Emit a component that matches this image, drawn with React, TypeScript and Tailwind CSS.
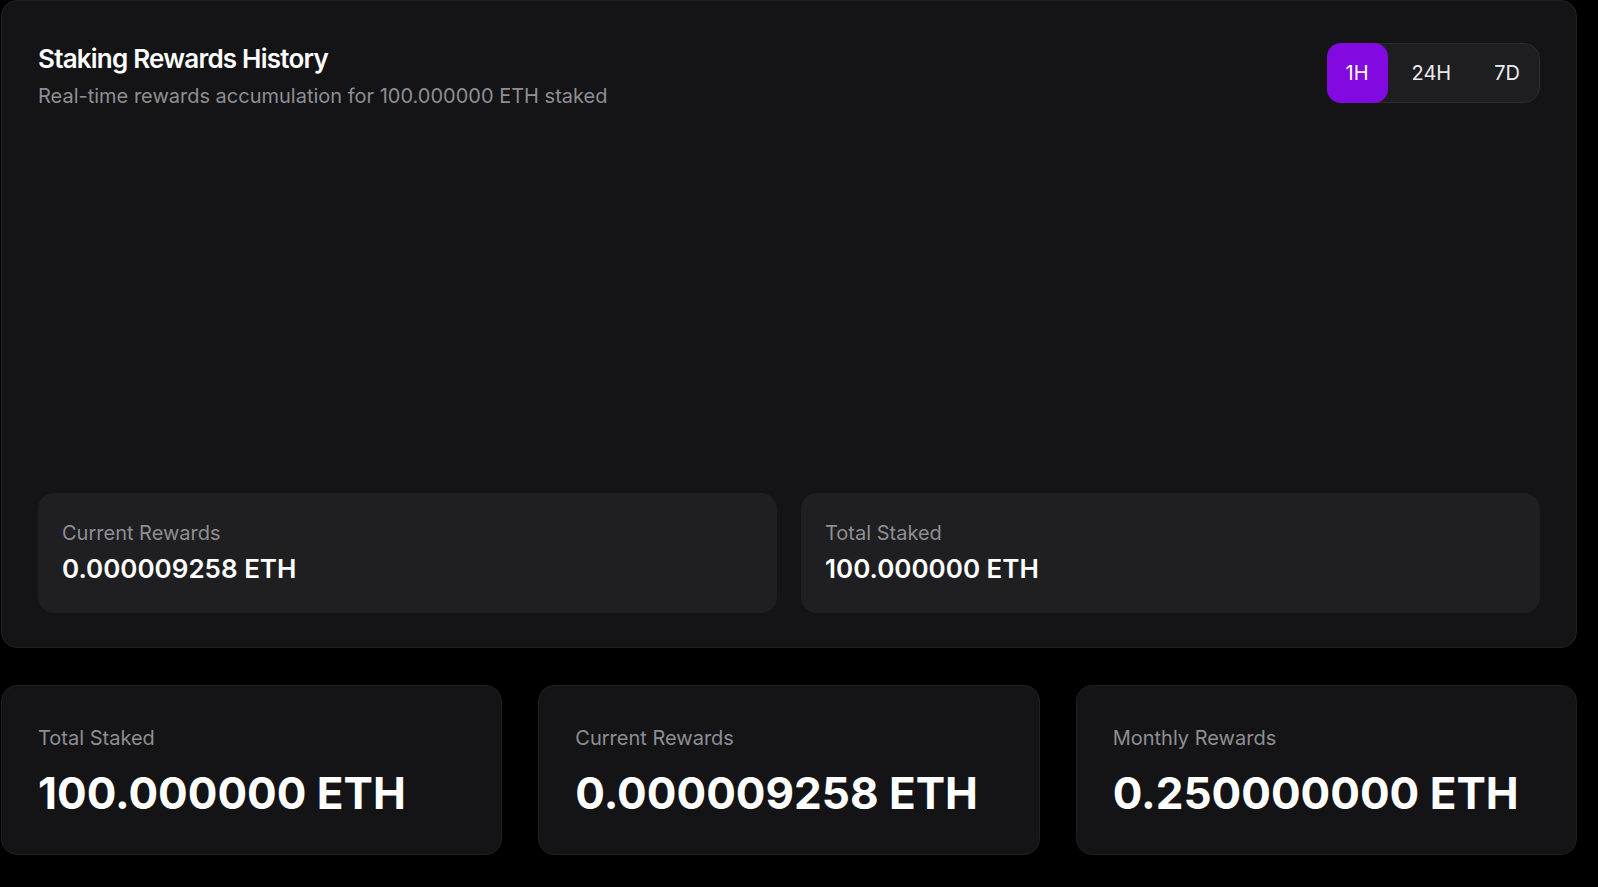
import React from 'react';

const ranges = ['1H', '24H', '7D'];

const summary = [
    { label: 'Total Staked', value: '100.000000 ETH' },
    { label: 'Current Rewards', value: '0.000009258 ETH' },
    { label: 'Monthly Rewards', value: '0.250000000 ETH' },
];

const App: React.FC = () => {
    const active = '1H';

    return (
        <div className="min-h-screen bg-black font-['Inter','Liberation_Sans',sans-serif] text-white">
            <div className="ml-px flex w-[1576px] flex-col gap-[37px]">
                {/* chart card */}
                <section className="flex h-[648px] flex-col rounded-2xl border border-[#222225] bg-[#141416] px-9 pt-[42px] pb-[34px]">
                    <div className="flex items-start justify-between">
                        <div>
                            <h2 className="text-[26px] leading-8 font-semibold tracking-[-0.03em] text-white">Staking Rewards History</h2>
                            <p className="mt-[7px] text-xl leading-7 text-[#8e8e93]">
                                Real-time rewards accumulation for 100.000000 ETH staked
                            </p>
                        </div>
                        <div className="flex h-[60px] gap-[5px] rounded-2xl border border-[#2c2c2f] bg-[#1e1e21]">
                            {ranges.map((r) => (
                                <button
                                    key={r}
                                    className={
                                        r === active
                                            ? '-my-px -ml-px h-[60px] rounded-[14px] bg-[#8209e0] px-[19px] text-xl text-white'
                                            : 'h-[58px] rounded-[14px] px-[19px] text-xl text-[#ebebf0]'
                                    }
                                >
                                    {r}
                                </button>
                            ))}
                        </div>
                    </div>

                    <div className="flex-1" />

                    <div className="grid grid-cols-2 gap-6">
                        <div className="flex flex-col gap-1.5 rounded-2xl bg-[#1f1f22] px-6 pt-[26px] pb-7">
                            <span className="text-xl leading-7 text-[#8e8e93]">Current Rewards</span>
                            <span className="text-[26px] leading-8 font-semibold">0.000009258 ETH</span>
                        </div>
                        <div className="flex flex-col gap-1.5 rounded-2xl bg-[#1f1f22] px-6 pt-[26px] pb-7">
                            <span className="text-xl leading-7 text-[#8e8e93]">Total Staked</span>
                            <span className="text-[26px] leading-8 font-semibold">100.000000 ETH</span>
                        </div>
                    </div>
                </section>

                {/* summary cards */}
                <div className="grid grid-cols-3 gap-9">
                    {summary.map((s) => (
                        <div key={s.label} className="rounded-2xl border border-[#1f1f22] bg-[#141416] px-9 pt-[38px] pb-[39px]">
                            <div className="text-xl leading-7 text-[#8e8e93]">{s.label}</div>
                            <div className="mt-[19px] text-[44px] leading-none font-bold">{s.value}</div>
                        </div>
                    ))}
                </div>
            </div>
        </div>
    );
};

export default App;
